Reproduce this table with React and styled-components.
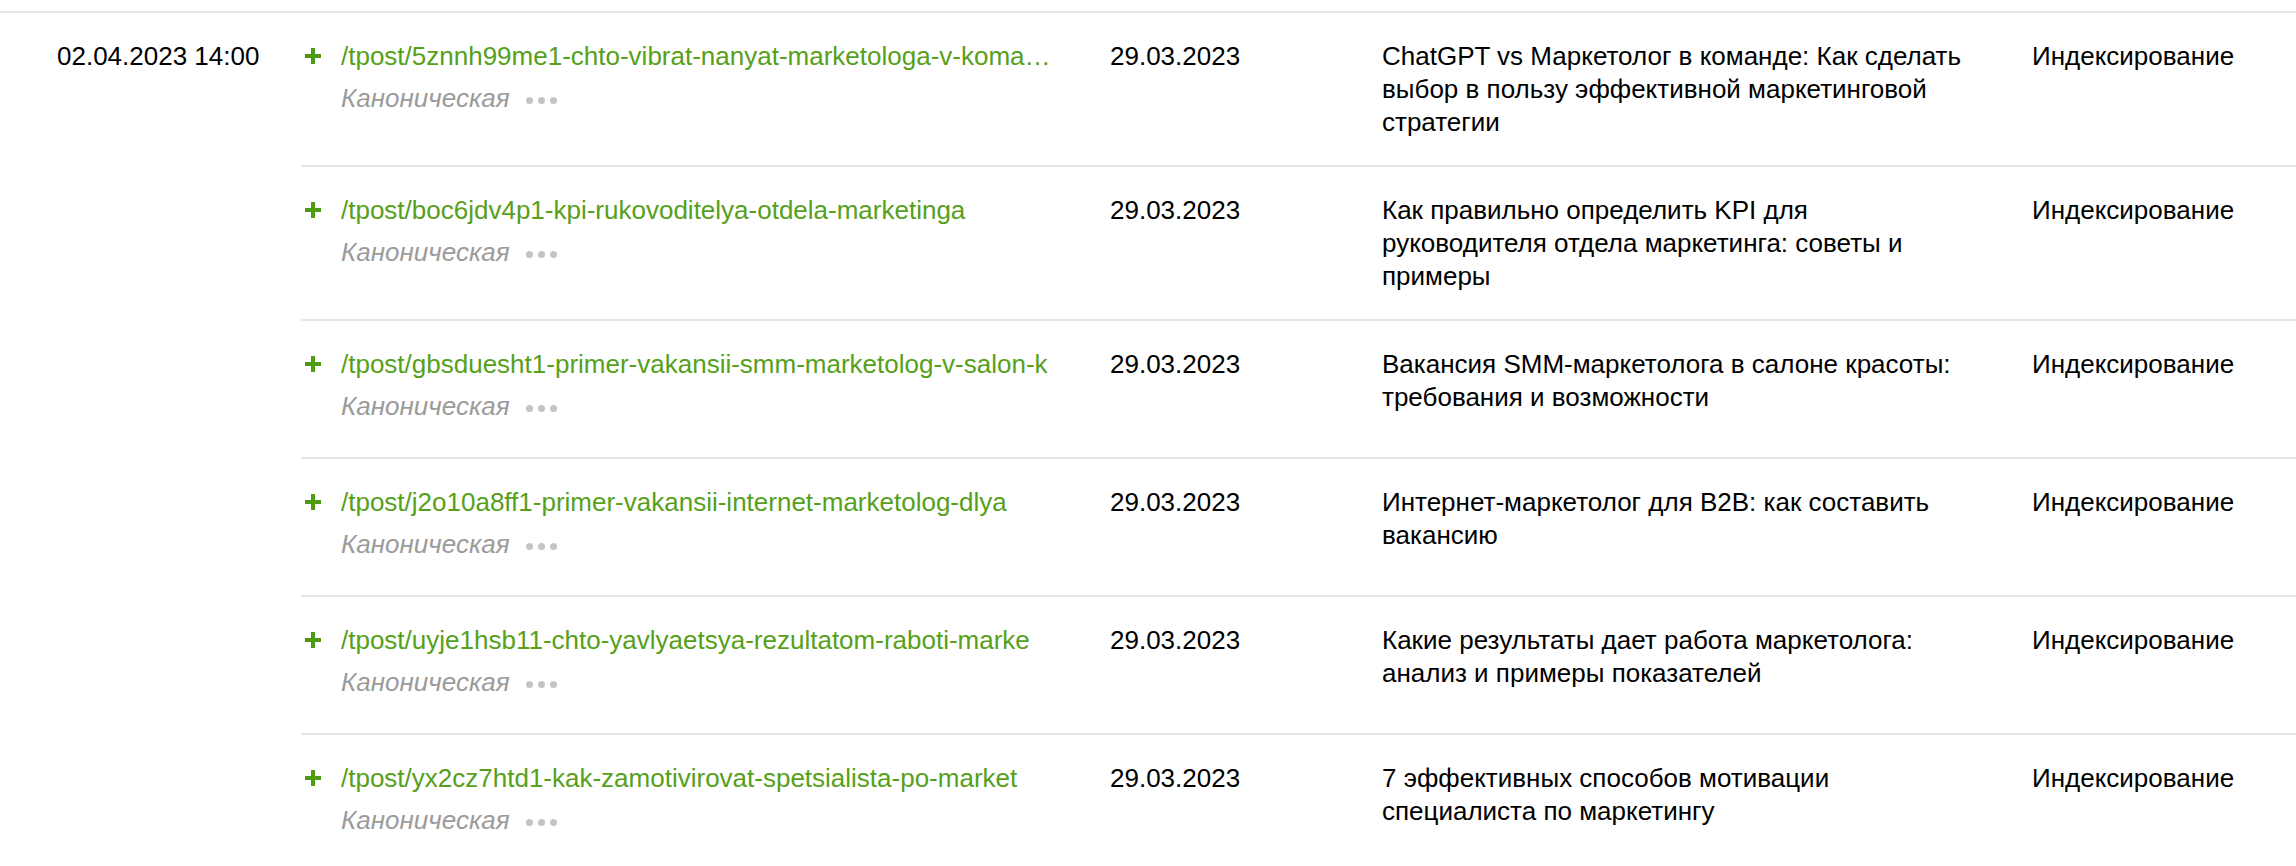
import React from "react";
import styled, { createGlobalStyle } from "styled-components";

const GlobalStyle = createGlobalStyle`
  html, body {
    margin: 0;
    padding: 0;
    background: #ffffff;
  }
  body {
    font-family: "Liberation Sans", Arial, Helvetica, sans-serif;
    color: #000;
  }
`;

const Page = styled.div`
  padding-top: 11px;
`;

const Group = styled.section`
  display: flex;
  border-top: 2px solid #e6e6e6;
`;

const GroupDate = styled.div`
  width: 301px;
  flex: none;
  box-sizing: border-box;
  padding: 27px 0 0 57px;
  font-size: 26px;
  line-height: 33px;
  white-space: nowrap;
`;

const Rows = styled.div`
  flex: 1;
  display: flex;
  flex-direction: column;
`;

const Row = styled.div`
  display: grid;
  grid-template-columns: 809px 272px 650px 1fr;
  padding: 27px 0 26px;
  border-bottom: ${(p) => (p.$last ? "none" : "2px solid #e6e6e6")};
  font-size: 26px;
  line-height: 33px;
`;

const LinkCell = styled.div`
  display: grid;
  grid-template-columns: 16px 1fr;
  column-gap: 20px;
  padding-left: 4px;
  align-items: start;
`;

const PlusIcon = styled.svg`
  width: 16px;
  height: 16px;
  margin-top: 8px;
  display: block;
`;

const LinkBlock = styled.div`
  display: flex;
  flex-direction: column;
  min-width: 0;
`;

const UrlLink = styled.a`
  color: #56a01a;
  text-decoration: none;
  white-space: nowrap;
  overflow: hidden;
  text-overflow: ellipsis;
  max-width: 712px;
`;

const CanonLine = styled.div`
  display: flex;
  align-items: center;
  gap: 16px;
  margin: 9px 0 8px;
  height: 33px;
`;

const CanonLabel = styled.span`
  font-style: italic;
  color: #9b9b9b;
  font-size: 26px;
`;

const Dots = styled.span`
  display: inline-flex;
  gap: 5px;
  align-items: center;
  margin-top: 4px;
`;

const Dot = styled.span`
  width: 7px;
  height: 7px;
  border-radius: 50%;
  background: #c4c4c4;
`;

const DateCell = styled.div`
  white-space: nowrap;
`;

const TitleCell = styled.div`
  display: flex;
  flex-direction: column;
`;

const TitleLine = styled.span`
  white-space: nowrap;
`;

const StatusCell = styled.div`
  white-space: nowrap;
`;

const Plus = () => (
  <PlusIcon viewBox="0 0 16 16" aria-hidden="true">
    <rect x="0" y="6" width="16" height="4" fill="#4f9a10" />
    <rect x="6" y="0" width="4" height="16" fill="#4f9a10" />
  </PlusIcon>
);

const items = [
  {
    url: "/tpost/5znnh99me1-chto-vibrat-nanyat-marketologa-v-koma…",
    title: [
      "ChatGPT vs Маркетолог в команде: Как сделать",
      "выбор в пользу эффективной маркетинговой",
      "стратегии",
    ],
  },
  {
    url: "/tpost/boc6jdv4p1-kpi-rukovoditelya-otdela-marketinga",
    title: [
      "Как правильно определить KPI для",
      "руководителя отдела маркетинга: советы и",
      "примеры",
    ],
  },
  {
    url: "/tpost/gbsduesht1-primer-vakansii-smm-marketolog-v-salon-k",
    title: ["Вакансия SMM-маркетолога в салоне красоты:", "требования и возможности"],
  },
  {
    url: "/tpost/j2o10a8ff1-primer-vakansii-internet-marketolog-dlya",
    title: ["Интернет-маркетолог для B2B: как составить", "вакансию"],
  },
  {
    url: "/tpost/uyje1hsb11-chto-yavlyaetsya-rezultatom-raboti-marke",
    title: ["Какие результаты дает работа маркетолога:", "анализ и примеры показателей"],
  },
  {
    url: "/tpost/yx2cz7htd1-kak-zamotivirovat-spetsialista-po-market",
    title: ["7 эффективных способов мотивации", "специалиста по маркетингу"],
  },
];

export default function App() {
  return (
    <Page>
      <GlobalStyle />
      <Group>
        <GroupDate>02.04.2023 14:00</GroupDate>
        <Rows>
          {items.map((it, i) => (
            <Row key={it.url} $last={i === items.length - 1}>
              <LinkCell>
                <Plus />
                <LinkBlock>
                  <UrlLink href="#">{it.url}</UrlLink>
                  <CanonLine>
                    <CanonLabel>Каноническая</CanonLabel>
                    <Dots>
                      <Dot />
                      <Dot />
                      <Dot />
                    </Dots>
                  </CanonLine>
                </LinkBlock>
              </LinkCell>
              <DateCell>29.03.2023</DateCell>
              <TitleCell>
                {it.title.map((line) => (
                  <TitleLine key={line}>{line}</TitleLine>
                ))}
              </TitleCell>
              <StatusCell>Индексирование</StatusCell>
            </Row>
          ))}
        </Rows>
      </Group>
    </Page>
  );
}
